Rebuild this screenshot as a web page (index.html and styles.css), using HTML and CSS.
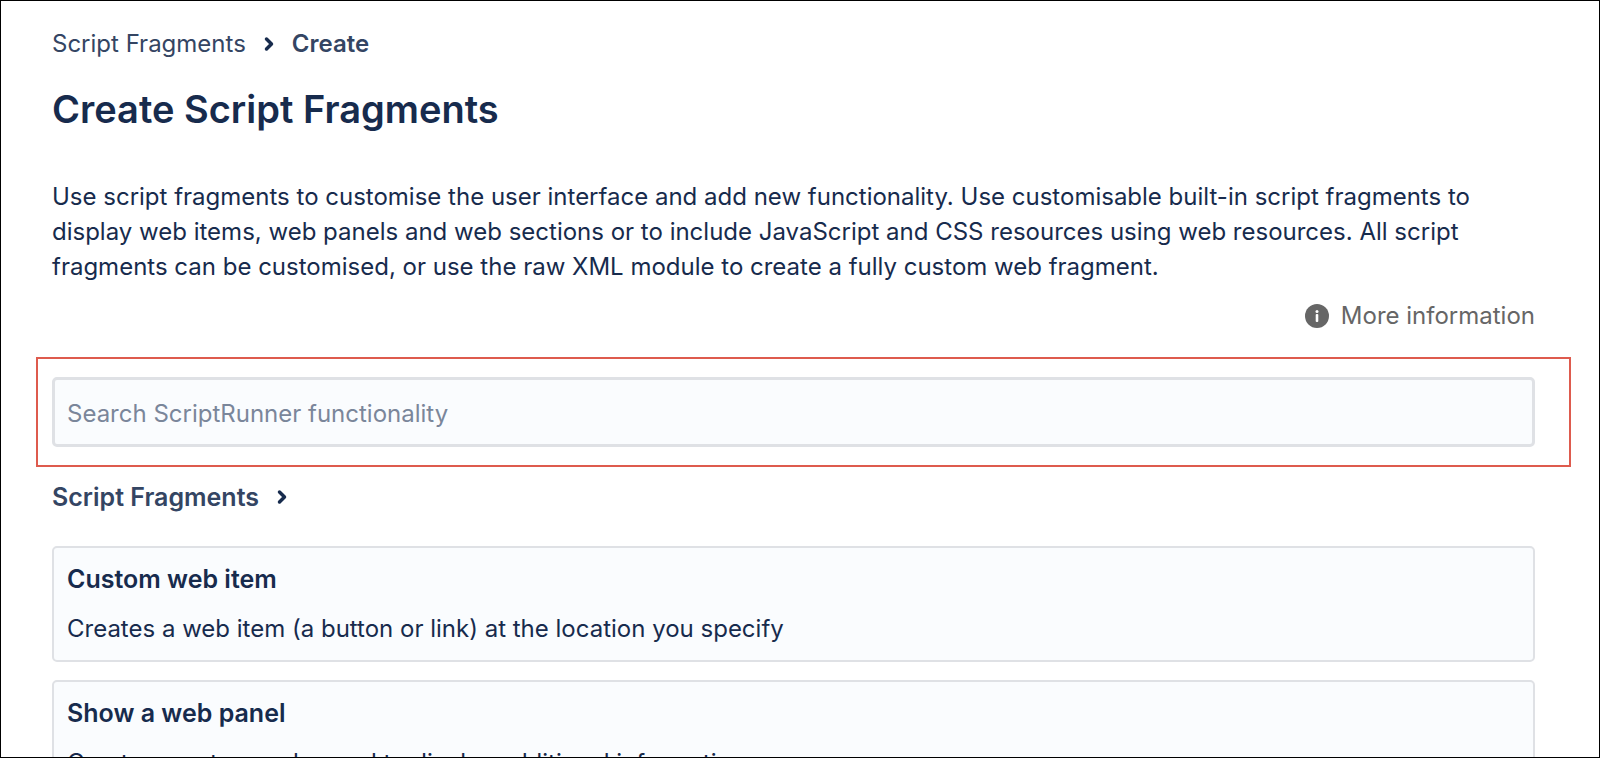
FILE: index.html
```html
<!DOCTYPE html>
<html lang="en">
<head>
    <meta charset="UTF-8">
    <meta name="viewport" content="width=device-width, initial-scale=1.0">
    <title>Create Script Fragments</title>
    <link rel="stylesheet" href="styles.css">
</head>
<body>
    <main class="page">

        <nav class="breadcrumbs" aria-label="Breadcrumb">
            <a href="#fragments">Script Fragments</a>
            <svg class="chevron" viewBox="0 0 10 16" aria-hidden="true"><path d="M2.5 3 L7.5 8 L2.5 13"/></svg>
            <a href="#create" class="current">Create</a>
        </nav>

        <h1>Create Script Fragments</h1>

        <p class="intro">Use script fragments to customise the user interface and add new functionality. Use customisable built-in script fragments to display web items, web panels and web sections or to include JavaScript and CSS resources using web resources. All script fragments can be customised, or use the raw XML module to create a fully custom web fragment.</p>

        <div class="more-info">
            <a href="#more">
                <svg class="info-icon" viewBox="0 0 24 24" aria-hidden="true">
                    <circle class="disc" cx="12" cy="12" r="12"/>
                    <circle class="mark" cx="12" cy="7.4" r="1.5"/>
                    <rect class="mark" x="10.7" y="10" width="2.6" height="8" rx="1"/>
                </svg>
                More information
            </a>
        </div>

        <div class="search-area">
            <input type="text" class="search" placeholder="Search ScriptRunner functionality" aria-label="Search ScriptRunner functionality">
        </div>

        <h2 id="fragments">
            <a href="#fragments">Script Fragments</a>
            <svg class="chevron" viewBox="0 0 10 16" aria-hidden="true"><path d="M2.5 3 L7.5 8 L2.5 13"/></svg>
        </h2>

        <!-- Fragment list -->
        <div class="fragment-list">
            <a class="fragment-card" href="#web-item">
                <h3>Custom web item</h3>
                <p>Creates a web item (a button or link) at the location you specify</p>
            </a>
            <a class="fragment-card" href="#web-panel">
                <h3>Show a web panel</h3>
                <p>Create a custom web panel to display additional information</p>
            </a>
        </div>

    </main>
</body>
</html>
```
FILE: styles.css
```css
:root {
    --text: #172b4d; --text-soft: #344563; --text-muted: #7a869a;
    --gray: #666; --border: #dfe1e5; --panel: #fafcfe; --red: #de5b4e;
}
* { box-sizing: border-box; }
body {
    margin: 0; height: 100vh; overflow: hidden;
    font-family: Inter, sans-serif; font-size: 24px; line-height: 36px;
    color: var(--text); background-color: #fff;
    border: 1px solid #000;
}
a { color: inherit; text-decoration: none; }
h1, h2, h3, p { margin: 0; }

.page { padding: 25px 64px 0 51px; }

.breadcrumbs, h2 { display: flex; align-items: center; gap: 18px; color: var(--text-soft); }
.breadcrumbs .current { font-weight: 600; }
.chevron { width: 10px; height: 16px; fill: none; stroke: var(--text); stroke-width: 3.5; stroke-linecap: round; stroke-linejoin: round; }

h1 { font-size: 38px; line-height: 48px; font-weight: 600; margin-top: 23px; }
.intro { margin-top: 46px; line-height: 35px; }

.more-info { display: flex; justify-content: flex-end; margin-top: 14px; color: var(--gray); }
.more-info a { display: flex; align-items: center; gap: 12px; }
.info-icon { width: 24px; height: 24px; }
.info-icon .disc { fill: var(--gray); }
.info-icon .mark { fill: #fff; }

/* Highlighted search box */
.search-area { margin: 23px -36px 0 -16px; padding: 18px 34px 18px 14px; border: 2px solid var(--red); }
.search {
    display: block; width: 100%; height: 70px; padding: 2px 12px 0;
    font: inherit; color: var(--text);
    background-color: var(--panel); border: 3px solid var(--border); border-radius: 5px;
}
.search::placeholder { color: var(--text-muted); opacity: 1; }

h2, h3 { font-size: 25px; font-weight: 600; line-height: 36px; }
h2 { margin-top: 12px; }

.fragment-list { display: flex; flex-direction: column; gap: 18px; margin-top: 31px; }
.fragment-card {
    display: block; padding: 13px;
    background-color: var(--panel); border: 2px solid var(--border); border-radius: 5px;
}
.fragment-card p { margin-top: 14px; }
```
